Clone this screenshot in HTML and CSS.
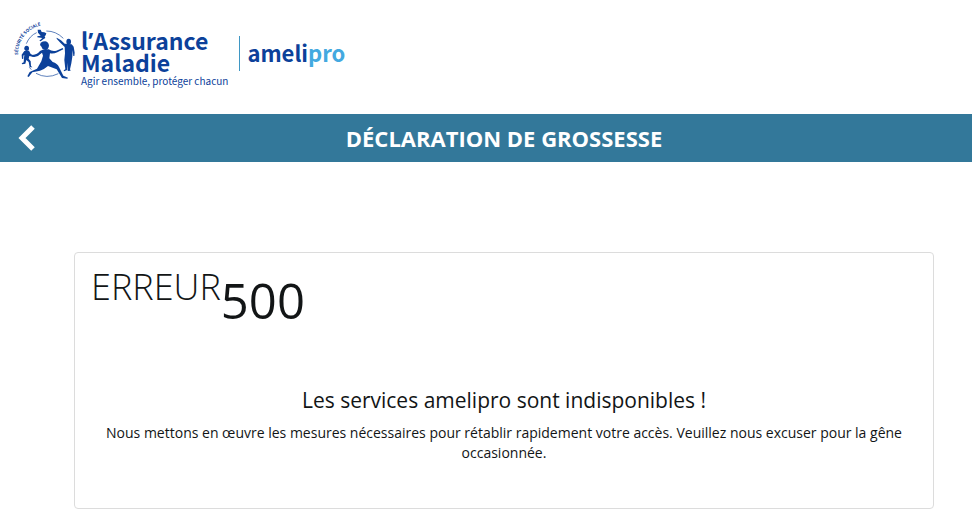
FILE: index.html
```html
<!DOCTYPE html>
<html lang="fr">
<head>
    <meta charset="UTF-8">
    <meta name="viewport" content="width=device-width, initial-scale=1.0">
    <title>amelipro - Déclaration de grossesse</title>
    <link rel="stylesheet" href="styles.css">
</head>
<body>
    <header class="site-header">
        <a href="#" class="logo-link">
            <svg class="logo-emblem" viewBox="30 15 210 210" aria-hidden="true">
                <defs>
                    <path id="arc" d="M54 135 A89 89 0 0 1 170 48"/>
                </defs>
                <text class="logo-arc"><textPath href="#arc">SÉCURITÉ SOCIALE</textPath></text>
                <!-- cercle -->
                <g fill="none" stroke="#0c419a" stroke-width="2">
                    <path d="M79 101 Q89 77 110 68"/>
                    <path d="M139 63 Q168 63 190 85"/>
                    <path d="M108 190 Q140 208 175 191"/>
                    <path d="M88 172 L94 179"/>
                </g>
                <g fill="#0c419a">
                    <!-- bébé -->
                    <path d="M113 59 L122 59 L125 66 L133 67 L139 70 L137 76 L134 79 L136 84 L130 88 L122 94 L118 92 L127 84 L112 82 L112 79 L122 77 L114 68 Z"/>
                    <!-- enfant à gauche -->
                    <ellipse cx="80" cy="115" rx="7" ry="8"/>
                    <path d="M73 123 L87 122 L92 132 L103 137 L101 141 L88 138 L86 146 L92 154 L93 168 L97 172 L89 172 L86 156 L79 150 L76 161 L67 163 L65 160 L71 157 L72 144 L73 134 L70 137 L70 146 L66 147 L65 134 Z"/>
                    <!-- coureuse -->
                    <path d="M122 98 Q128 94 136 94 Q146 96 147 107 Q145 119 137 120 Q126 119 125 111 L120 105 Z"/>
                    <path d="M128 119 L146 118 Q156 125 169 122 L188 114 L190 118 L172 127 Q161 132 150 130 L148 145 L158 156 Q172 160 177 171 L190 197 L204 203 L202 206 L186 204 L170 178 L144 168 Q133 178 120 182 L97 187 L86 201 L82 199 L89 186 L111 176 L124 154 L129 137 L126 128 Q116 139 103 141 L95 139 L97 135 Q113 133 120 123 Z"/>
                    <!-- adulte à droite -->
                    <ellipse cx="206" cy="95" rx="7" ry="9"/>
                    <path d="M170 83 L183 91 L194 101 L215 103 L221 110 L224 128 L223 138 L220 138 L218 120 L217 140 L214 160 L210 178 L212 182 L203 183 L204 176 L204 158 L202 180 L192 184 L191 181 L196 178 L193 150 L195 130 L194 111 L181 98 L170 86 Z"/>
                </g>
            </svg>
            <span class="logo-text">
                <span class="logo-name">l<span class="apostrophe">’</span>Assurance</span>
                <span class="logo-name">Maladie</span>
                <span class="logo-baseline">Agir ensemble, protéger chacun</span>
            </span>
            <span class="logo-ameli">ameli<span class="logo-pro">pro</span></span>
        </a>
    </header>

    <div class="title-bar">
        <button type="button" class="back-button" aria-label="Retour">
            <svg class="back-icon" viewBox="0 0 18 26" aria-hidden="true">
                <path d="M15 2 L4 13 L15 24" fill="none" stroke="#fff" stroke-width="5"/>
            </svg>
        </button>
        <h1>DÉCLARATION DE GROSSESSE</h1>
    </div>

    <main class="container">
        <section class="error-card">
            <div class="error-code">
                <span class="error-label">ERREUR</span><span class="error-number">500</span>
            </div>
            <div class="error-message">
                <h2>Les services amelipro sont indisponibles !</h2>
                <p>Nous mettons en œuvre les mesures nécessaires pour rétablir rapidement votre accès. Veuillez nous excuser pour la gêne occasionnée.</p>
            </div>
        </section>
    </main>
</body>
</html>
```
FILE: styles.css
```css
body {
    font-family: 'Open Sans', sans-serif;
    margin: 0;
    background-color: #fff;
    color: #121516;
}

/* Logo */
.site-header {
    display: flex;
    padding: 15px 10px 25px;
}

.logo-link {
    display: flex;
    align-items: flex-start;
    color: #0c419a;
    font-family: 'Noto Sans CJK SC', sans-serif;
    font-weight: 700;
    text-decoration: none;
}

.logo-emblem {
    width: 70px;
    height: 70px;
}

.logo-arc {
    fill: #0c419a;
    font-size: 13px;
}

.logo-text {
    display: flex;
    flex-direction: column;
    padding: 14px 0 0 1px;
}

.logo-name {
    font-size: 23px;
    line-height: 22px;
}

.apostrophe {
    font-family: 'Open Sans', sans-serif;
    line-height: 0;
}

.logo-baseline {
    font-size: 10px;
    font-weight: 400;
    line-height: 16px;
}

.logo-ameli {
    margin: 21px 0 0 11px;
    padding: 0 0 3px 7px;
    border-left: 1px solid #3f97c4;
    font-size: 22px;
    line-height: 32px;
}

.logo-pro {
    color: #43a9e0;
}

/* Bandeau de titre */
.title-bar {
    display: grid;
    grid-template-columns: 48px 1fr 12px;
    align-items: center;
    height: 48px;
    background-color: #33789a;
    color: #fff;
}

.back-button {
    display: flex;
    align-items: center;
    justify-content: center;
    height: 48px;
    padding: 0 0 0 6px;
    border: none;
    background: none;
    cursor: pointer;
}

.back-icon {
    width: 18px;
    height: 26px;
}

.title-bar h1 {
    margin: 0;
    font-size: 22px;
    font-weight: 700;
    line-height: 48px;
    text-align: center;
}

/* Carte d'erreur */
.container {
    padding: 90px 38px 21px 74px;
}

.error-card {
    padding: 16px;
    border: 1px solid #dcdcdc;
    border-radius: 4px;
}

.error-code {
    display: flex;
    align-items: flex-start;
}

.error-label {
    font-size: 36px;
    font-weight: 300;
    line-height: 36px;
}

.error-number {
    font-size: 49px;
    line-height: 62px;
}

.error-message {
    padding: 53px 8px 29px;
    text-align: center;
}

.error-message h2 {
    margin: 0 0 7px;
    font-size: 21px;
    font-weight: 400;
    line-height: 32px;
}

.error-message p {
    margin: 0;
    font-size: 14px;
    line-height: 20px;
}
```
